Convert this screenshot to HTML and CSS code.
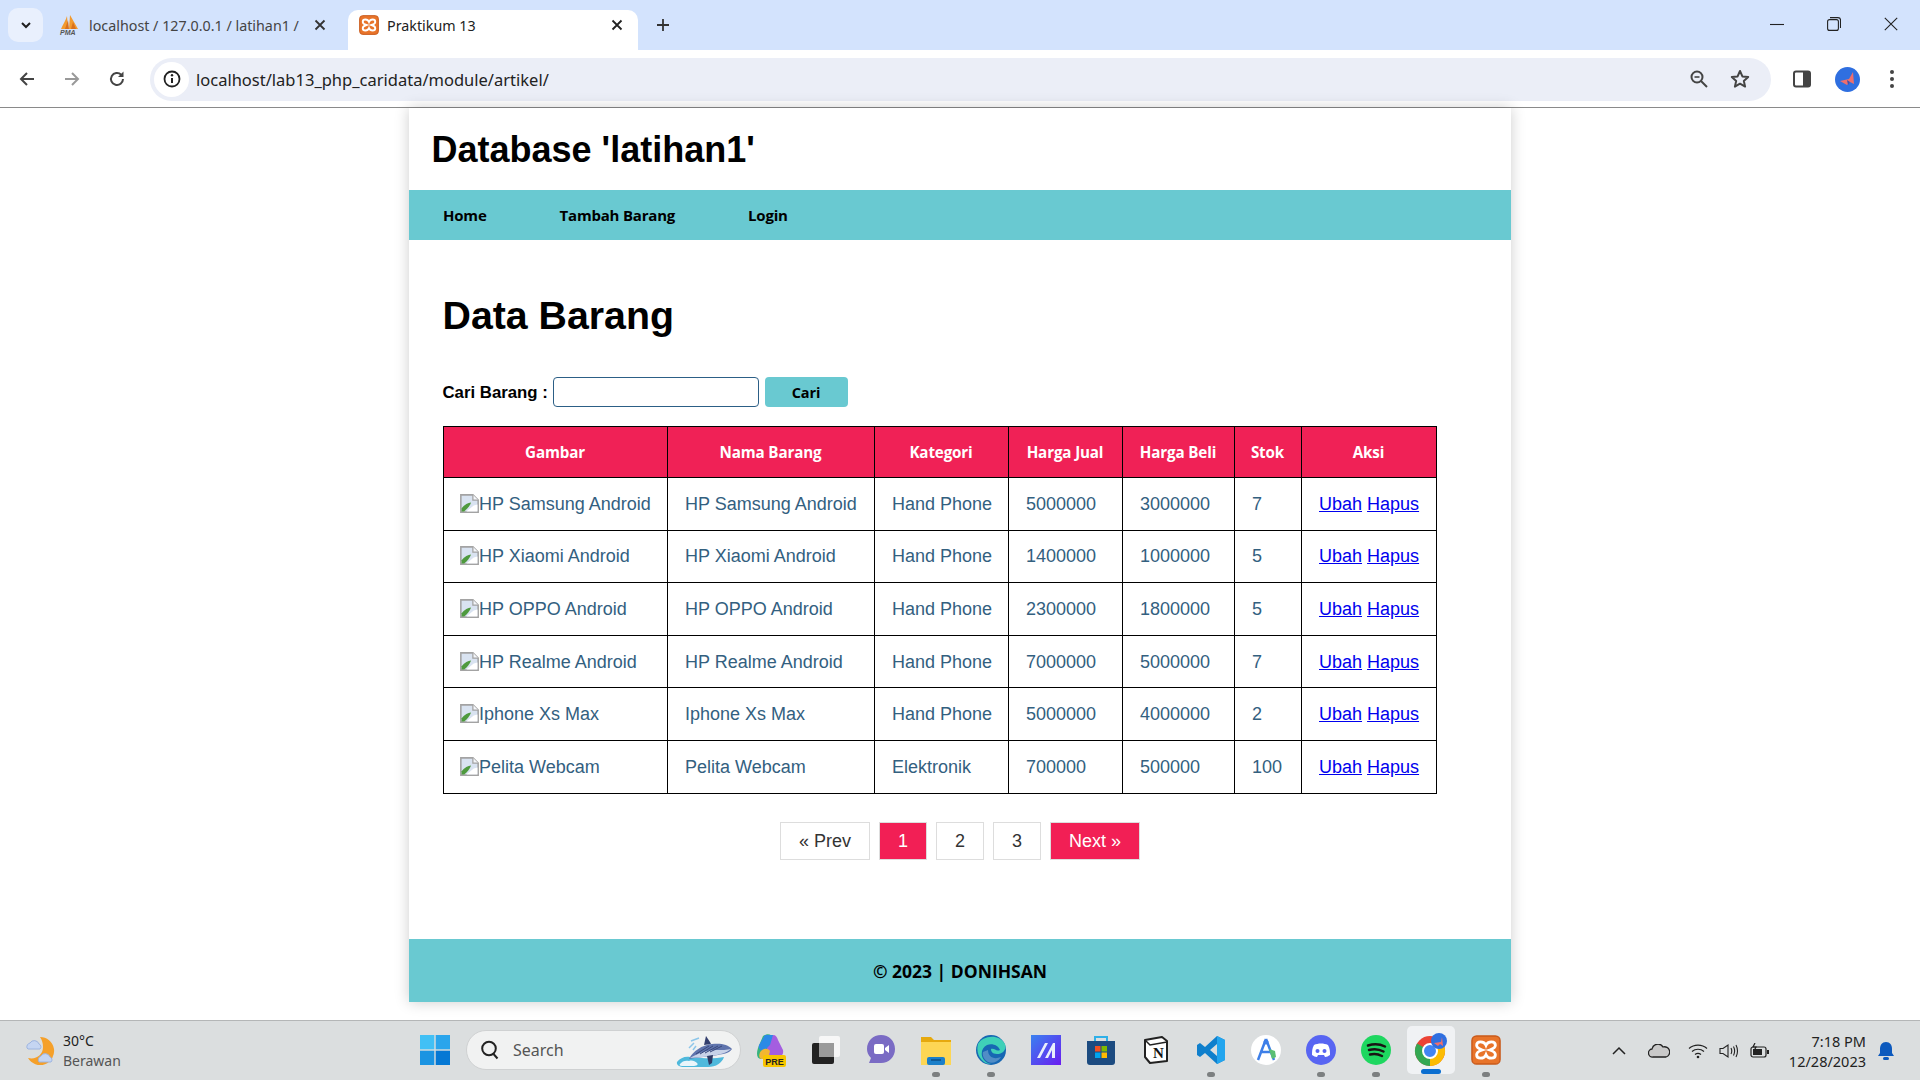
FILE: index.html
```html
<!DOCTYPE html>
<html lang="en">
<head>
    <meta charset="UTF-8">
    <title>Praktikum 13</title>
    <link rel="stylesheet" href="styles.css">
</head>
<body>
    <svg class="defs">
        <symbol id="broken" viewBox="0 0 18 18">
            <path d="M.8.8h11.400l5 5v11.400H.8z" fill="#d9e3f1" stroke="#a3a3a3" stroke-width="1.500"/>
            <path d="M12.200.8v5h5" fill="#f4f6fa" stroke="#a3a3a3" stroke-width="1.200"/>
            <path d="M1.500 16.500v-3c3-3.500 6-5.500 9-5.500-1 3-4 6.500-6.500 8.500z" fill="#4e9a3e"/>
            <path d="M6 16.500l7-5.500 3.500-1v6.500z" fill="#fff"/>
        </symbol>
        <symbol id="xampp" viewBox="0 0 32 32">
            <rect x="1" y="1" width="30" height="30" rx="5" fill="#e8742a"/>
            <rect x="1" y="1" width="30" height="30" rx="5" fill="none" stroke="#c9591a" stroke-width="1.500"/>
            <path d="M16 11c-2-5-10-5-10 0 0 3 3 4 6 5-3 1-6 2-6 5 0 5 8 5 10 0 2 5 10 5 10 0 0-3-3-4-6-5 3-1 6-2 6-5 0-5-8-5-10 0z" fill="none" stroke="#fff" stroke-width="3"/>
        </symbol>
    </svg>

    <div class="tabstrip">
        <div class="tab-search">
            <svg width="14" height="14" viewBox="0 0 14 14"><path d="M3 5l4 4 4-4" fill="none" stroke="#1f1f1f" stroke-width="2"/></svg>
        </div>
        <div class="tab">
            <svg class="favicon" width="22" height="22" viewBox="0 0 22 22">
                <path d="M2 15C4 10 7 6 8 2l1 13zM10 15l1-14 8 14z" fill="#f29a2e"/>
                <path d="M6 15l3-9 1 9zM12 15l2-7 3 7z" fill="#d9701c"/>
                <text x="1" y="21" class="pma">PMA</text>
            </svg>
            <span class="tab-title">localhost / 127.0.0.1 / latihan1 /</span>
            <svg class="tab-x" width="12" height="12" viewBox="0 0 12 12"><path d="M1.500 1.500l9 9M10.500 1.500l-9 9" stroke="#333" stroke-width="1.800"/></svg>
        </div>
        <div class="tab active">
            <svg class="favicon" width="20" height="20"><use href="#xampp"/></svg>
            <span class="tab-title">Praktikum 13</span>
            <svg class="tab-x" width="12" height="12" viewBox="0 0 12 12"><path d="M1.500 1.500l9 9M10.500 1.500l-9 9" stroke="#222" stroke-width="1.800"/></svg>
        </div>
        <svg class="new-tab" width="16" height="16" viewBox="0 0 16 16"><path d="M8 2v12M2 8h12" stroke="#333" stroke-width="1.800"/></svg>
        <div class="win-controls">
            <svg width="14" height="14" viewBox="0 0 14 14"><path d="M0 7.500h14" stroke="#222" stroke-width="1.100"/></svg>
            <svg width="14" height="14" viewBox="0 0 14 14"><rect x=".6" y="2.600" width="10.800" height="10.800" rx="2" fill="none" stroke="#222" stroke-width="1.100"/><path d="M3 .6h8a2.500 2.500 0 0 1 2.500 2.500v8" fill="none" stroke="#222" stroke-width="1.100"/></svg>
            <svg width="14" height="14" viewBox="0 0 14 14"><path d="M.8.8l12.400 12.400M13.200.8L.8 13.200" stroke="#222" stroke-width="1.100"/></svg>
        </div>
    </div>

    <div class="toolbar">
        <svg class="nav-btn" width="18" height="18" viewBox="0 0 18 18"><path d="M16 9H3M9 3L3 9l6 6" fill="none" stroke="#444" stroke-width="2"/></svg>
        <svg class="nav-btn" width="18" height="18" viewBox="0 0 18 18"><path d="M2 9h13M9 3l6 6-6 6" fill="none" stroke="#999" stroke-width="2"/></svg>
        <svg class="nav-btn" width="18" height="18" viewBox="0 0 18 18"><path d="M15 9a6 6 0 1 1-1.800-4.300" fill="none" stroke="#444" stroke-width="2"/><path d="M15.500 1.500v5.500H10z" fill="#444"/></svg>
        <div class="omnibox">
            <span class="info-chip">
                <svg width="18" height="18" viewBox="0 0 18 18"><circle cx="9" cy="9" r="7.500" fill="none" stroke="#222" stroke-width="1.800"/><path d="M9 8v5" stroke="#222" stroke-width="2"/><circle cx="9" cy="5.300" r="1.200" fill="#222"/></svg>
            </span>
            <span class="url">localhost/lab13_php_caridata/module/artikel/</span>
            <svg class="omni-zoom" width="20" height="20" viewBox="0 0 20 20"><circle cx="8" cy="8" r="5.500" fill="none" stroke="#444" stroke-width="2"/><path d="M12 12l6 6" stroke="#444" stroke-width="2"/><path d="M5.500 8h5" stroke="#444" stroke-width="1.600"/></svg>
            <svg class="omni-star" width="20" height="20" viewBox="0 0 20 20"><path d="M10 2l2.400 5.400 5.800.6-4.400 3.900 1.300 5.700L10 14.700l-5.100 2.900 1.300-5.700L1.800 8l5.800-.6z" fill="none" stroke="#444" stroke-width="2" stroke-linejoin="round"/></svg>
        </div>
        <svg class="side-panel" width="18" height="18" viewBox="0 0 18 18"><rect x="1" y="1.500" width="16" height="15" rx="2" fill="#fff" stroke="#444" stroke-width="2"/><rect x="10" y="1.500" width="7" height="15" fill="#444"/></svg>
        <svg class="avatar" width="25" height="25" viewBox="0 0 25 25"><circle cx="12.500" cy="12.500" r="12.500" fill="#2f6fe0"/><path d="M5 14l9-2 4-7 1 12-4-2-3 3z" fill="#ef6f6c"/><path d="M12 13l3 2-2 3z" fill="#3a50b0"/></svg>
        <svg class="menu-dots" width="6" height="20" viewBox="0 0 6 20"><circle cx="3" cy="3" r="2" fill="#444"/><circle cx="3" cy="10" r="2" fill="#444"/><circle cx="3" cy="17" r="2" fill="#444"/></svg>
    </div>

    <div class="viewport">
        <div class="container">
            <header class="site-header">
                <h1>Database 'latihan1'</h1>
            </header>
            <nav class="site-nav">
                <a href="#">Home</a>
                <a href="#">Tambah Barang</a>
                <a href="#">Login</a>
            </nav>
            <main class="content">
                <h2>Data Barang</h2>
                <form class="search-form">
                    <label>Cari Barang :</label>
                    <input type="text" class="search-input">
                    <button type="button" class="search-btn">Cari</button>
                </form>
                <table class="data-table">
                    <thead>
                        <tr>
                            <th>Gambar</th>
                            <th>Nama Barang</th>
                            <th>Kategori</th>
                            <th>Harga Jual</th>
                            <th>Harga Beli</th>
                            <th>Stok</th>
                            <th>Aksi</th>
                        </tr>
                    </thead>
                    <tbody>
                        <tr>
                            <td><svg class="broken-img"><use href="#broken"/></svg>HP Samsung Android</td>
                            <td>HP Samsung Android</td>
                            <td>Hand Phone</td>
                            <td>5000000</td>
                            <td>3000000</td>
                            <td>7</td>
                            <td><a href="#">Ubah</a> <a href="#">Hapus</a></td>
                        </tr>
                        <tr>
                            <td><svg class="broken-img"><use href="#broken"/></svg>HP Xiaomi Android</td>
                            <td>HP Xiaomi Android</td>
                            <td>Hand Phone</td>
                            <td>1400000</td>
                            <td>1000000</td>
                            <td>5</td>
                            <td><a href="#">Ubah</a> <a href="#">Hapus</a></td>
                        </tr>
                        <tr>
                            <td><svg class="broken-img"><use href="#broken"/></svg>HP OPPO Android</td>
                            <td>HP OPPO Android</td>
                            <td>Hand Phone</td>
                            <td>2300000</td>
                            <td>1800000</td>
                            <td>5</td>
                            <td><a href="#">Ubah</a> <a href="#">Hapus</a></td>
                        </tr>
                        <tr>
                            <td><svg class="broken-img"><use href="#broken"/></svg>HP Realme Android</td>
                            <td>HP Realme Android</td>
                            <td>Hand Phone</td>
                            <td>7000000</td>
                            <td>5000000</td>
                            <td>7</td>
                            <td><a href="#">Ubah</a> <a href="#">Hapus</a></td>
                        </tr>
                        <tr>
                            <td><svg class="broken-img"><use href="#broken"/></svg>Iphone Xs Max</td>
                            <td>Iphone Xs Max</td>
                            <td>Hand Phone</td>
                            <td>5000000</td>
                            <td>4000000</td>
                            <td>2</td>
                            <td><a href="#">Ubah</a> <a href="#">Hapus</a></td>
                        </tr>
                        <tr>
                            <td><svg class="broken-img"><use href="#broken"/></svg>Pelita Webcam</td>
                            <td>Pelita Webcam</td>
                            <td>Elektronik</td>
                            <td>700000</td>
                            <td>500000</td>
                            <td>100</td>
                            <td><a href="#">Ubah</a> <a href="#">Hapus</a></td>
                        </tr>
                    </tbody>
                </table>
                <div class="pagination">
                    <a href="#" class="wide">&laquo; Prev</a>
                    <a href="#" class="current">1</a>
                    <a href="#">2</a>
                    <a href="#">3</a>
                    <a href="#" class="wide current">Next &raquo;</a>
                </div>
            </main>
            <footer class="site-footer">&copy; 2023 | DONIHSAN</footer>
        </div>
    </div>

    <div class="taskbar">
        <div class="weather">
            <svg width="32" height="32" viewBox="0 0 32 32">
                <path d="M16 2a14 14 0 1 1-12 21c8 2 15-3 15-11 0-4-1-7-3-10z" fill="#f5a02a"/>
                <path d="M3 13a4 4 0 0 1 3-5 5 5 0 0 1 9 1 3 3 0 0 1 1 5H4z" fill="#c5d5f2" stroke="#9db4e0"/>
                <path d="M15 27a4 4 0 0 1 2-6 5 5 0 0 1 9 1 3 3 0 0 1 1 5z" fill="#c5d5f2" stroke="#9db4e0"/>
            </svg>
            <div class="weather-text">
                <span class="temp">30°C</span>
                <span class="cond">Berawan</span>
            </div>
        </div>
        <div class="task-center">
            <svg class="win-logo" width="30" height="30" viewBox="0 0 30 30">
                <rect x="0" y="0" width="14.300" height="14.300" fill="#41c0f5"/>
                <rect x="15.700" y="0" width="14.300" height="14.300" fill="#2aa5ec"/>
                <rect x="0" y="15.700" width="14.300" height="14.300" fill="#1b94e2"/>
                <rect x="15.700" y="15.700" width="14.300" height="14.300" fill="#0578d4"/>
            </svg>
            <div class="search-pill">
                <svg width="22" height="22" viewBox="0 0 22 22"><circle cx="10" cy="9.500" r="6.800" fill="none" stroke="#222" stroke-width="2"/><path d="M14.500 15l4 4.500" stroke="#222" stroke-width="2"/></svg>
                <span>Search</span>
                <svg class="whale" width="62" height="40" viewBox="0 0 62 40">
                    <path d="M1 32c3-4 8-6 13-5l12 1c8 1 16 0 22-1-2 6-8 10-16 10H8c-4 0-8-2-7-5z" fill="#4fb9dc"/>
                    <path d="M4 34c2-3 6-4 9-3 3-1 6 0 8 2 2 2-1 3-4 3H6c-2 0-3-1-2-2z" fill="#eaf5fa"/>
                    <path d="M13 29c4-8 13-14 23-15 8-1 16 0 20 5-2 4-9 5-14 6-9 2-20 2-29 4z" fill="#5f74ad"/>
                    <path d="M14 28c8-5 18-8 26-8 6 0 11 0 15-1-3 3-9 5-14 6-9 2-19 2-27 3z" fill="#c8d2e8"/>
                    <path d="M28 15l2-9 4 6 1 2z" fill="#333f6e"/>
                    <path d="M31 26l2 9 3-2 1-8z" fill="#2f3a66"/>
                    <path d="M20 24l13-8M24 24l13-8M29 23l13-7M34 22l12-6" stroke="#39487c" stroke-width="1"/>
                    <path d="M13 18l5-5M17 20l3-4M15 11l8-3" stroke="#8cc6ea" stroke-width="1.500" fill="none"/>
                </svg>
            </div>
            <div class="task-apps">
                <span class="app">
                    <svg width="32" height="34" viewBox="0 0 32 34">
                        <path d="M8 3c5-3 9-2 10 3l5 13-8 7H6C2 26 1 21 3 15z" fill="#36b37e"/>
                        <path d="M12 2h6c3 0 4 2 5 5l5 10c1 4-2 8-6 8H12z" fill="#a45ee0"/>
                        <path d="M10 2h8l-3 10-6 6c-4 0-6-3-5-6z" fill="#2b8ae6"/>
                        <path d="M6 18c3-3 7-3 9 0l-2 8H7c-3 0-4-4-1-8z" fill="#f2b632"/>
                        <rect x="8" y="22" width="23" height="12" rx="2" fill="#f7c600"/>
                        <text x="19.500" y="31.500" class="pre">PRE</text>
                    </svg>
                </span>
                <span class="app">
                    <svg width="30" height="30" viewBox="0 0 30 30"><rect x="1" y="8" width="22" height="21" rx="2" fill="#222"/><rect x="8" y="1" width="21" height="21" rx="2" fill="#f7f7f7"/><rect x="8" y="8" width="15" height="14" fill="#9a9a9a"/></svg>
                </span>
                <span class="app">
                    <svg width="30" height="32" viewBox="0 0 30 32"><path d="M15 1c8 0 14 6 14 14s-6 14-14 14H3l2-5C2 21 1 18 1 15 1 7 7 1 15 1z" fill="#7a6bc4"/><rect x="8" y="10" width="10" height="10" rx="2" fill="#fff"/><path d="M19 14l4-3v8l-4-3z" fill="#fff"/></svg>
                </span>
                <span class="app dot">
                    <svg width="30" height="30" viewBox="0 0 30 30"><path d="M0 2h10l3 3h17v24H0z" fill="#e6a90e"/><rect x="0" y="7" width="30" height="23" fill="#fdd654"/><rect x="6" y="22" width="18" height="8" rx="2" fill="#1b7fc9"/><path d="M10 25h10" stroke="#0c4e86" stroke-width="1.500"/></svg>
                </span>
                <span class="app dot">
                    <svg width="32" height="32" viewBox="0 0 32 32"><circle cx="16" cy="16" r="15" fill="#1767b3"/><path d="M3 10C7 2 24-1 30 10c2 5-2 10-8 10-5 0-6-3-6-5 4-1 5 3 9 1-2-5-8-7-13-5-4 2-6 6-5 11 1 4 5 8 10 8C8 31 0 21 3 10z" fill="#3fd0b8"/><path d="M13 16c0 7 6 10 13 7-3 5-9 7-13 5-4-2-6-7-5-10z" fill="#fff" opacity=".25"/></svg>
                </span>
                <span class="app">
                    <svg width="30" height="30" viewBox="0 0 30 30"><defs><linearGradient id="mg" x1="0" y1="0" x2="1" y2="1"><stop offset="0" stop-color="#3a82f0"/><stop offset="1" stop-color="#6a1cf0"/></linearGradient></defs><rect width="30" height="30" fill="url(#mg)"/><path d="M6 23l8-15h3l-8 15zM14 23l8-15h2v15h-3v-8l-4 8z" fill="#e9eefc"/></svg>
                </span>
                <span class="app">
                    <svg width="30" height="32" viewBox="0 0 30 32"><path d="M9 8V3h12v5" fill="none" stroke="#2fb0e8" stroke-width="2"/><path d="M1 7h28v21a3 3 0 0 1-3 3H4a3 3 0 0 1-3-3z" fill="#1c4b80"/><rect x="9" y="12" width="5.500" height="5.500" fill="#f25022"/><rect x="15.500" y="12" width="5.500" height="5.500" fill="#7fba00"/><rect x="9" y="18.500" width="5.500" height="5.500" fill="#00a4ef"/><rect x="15.500" y="18.500" width="5.500" height="5.500" fill="#ffb900"/></svg>
                </span>
                <span class="app">
                    <svg width="26" height="28" viewBox="0 0 26 28"><path d="M2 4l17-3 5 4v20l-17 2-5-6z" fill="#fff" stroke="#222" stroke-width="2" stroke-linejoin="round"/><path d="M2 4l5 5 17-3" fill="none" stroke="#222" stroke-width="1.500"/><text x="15.500" y="22" class="notion">N</text></svg>
                </span>
                <span class="app dot">
                    <svg width="30" height="30" viewBox="0 0 30 30"><path d="M21 1l8 4v20l-8 4-12-11-5 4-3-2v-10l3-2 5 4zM21 9l-7 6 7 6z" fill="#0f7fcc"/><path d="M21 1l8 4v20l-8 4z" fill="#23a5ee"/></svg>
                </span>
                <span class="app">
                    <svg width="30" height="30" viewBox="0 0 30 30"><circle cx="15" cy="15" r="15" fill="#fff"/><path d="M15 4l-8 21M15 4l8 21M9 17h12" fill="none" stroke="#3d7fe8" stroke-width="2.500"/><circle cx="15" cy="7" r="2.500" fill="#3d7fe8"/><path d="M18 14l6 2 1 6-4 2z" fill="#5bbf73"/></svg>
                </span>
                <span class="app dot">
                    <svg width="30" height="30" viewBox="0 0 30 30"><circle cx="15" cy="15" r="15" fill="#5865f2"/><path d="M8 10c4-2 10-2 14 0 2 3 2 7 2 10-2 1-3 2-5 2l-1-2H12l-1 2c-2 0-3-1-5-2 0-3 0-7 2-10z" fill="#fff"/><circle cx="11.500" cy="16" r="2" fill="#5865f2"/><circle cx="18.500" cy="16" r="2" fill="#5865f2"/></svg>
                </span>
                <span class="app dot">
                    <svg width="30" height="30" viewBox="0 0 30 30"><circle cx="15" cy="15" r="15" fill="#1ed760"/><path d="M7 10.500c6-2 12-1.500 17 1M8 15c5-1.500 10-1 14.500 1.500M9 19.500c4-1 8-.7 12 1.500" fill="none" stroke="#191414" stroke-width="2.500" stroke-linecap="round"/></svg>
                </span>
                <span class="app running">
                    <svg width="34" height="34" viewBox="0 0 34 34">
                        <circle cx="16" cy="18" r="15" fill="#eb4335"/>
                        <path d="M16 18L3 10.500A15 15 0 0 0 16 33z" fill="#34a853"/>
                        <path d="M16 18v15a15 15 0 0 0 13-22.500z" fill="#fbbc04"/>
                        <circle cx="16" cy="18" r="7" fill="#4285f4" stroke="#fff" stroke-width="2"/>
                        <circle cx="25" cy="8" r="8" fill="#2f6fe0"/>
                        <path d="M20 10l7-1 1-5 1 9-3-2-2 2z" fill="#ef6f6c"/>
                    </svg>
                </span>
                <span class="app dot">
                    <svg width="30" height="30"><use href="#xampp"/></svg>
                </span>
            </div>
        </div>
        <div class="tray">
            <svg class="tray-caret" width="14" height="10" viewBox="0 0 14 10"><path d="M1 8l6-6 6 6" fill="none" stroke="#222" stroke-width="1.500"/></svg>
            <svg class="tray-cloud" width="22" height="14" viewBox="0 0 22 14"><path d="M5 13a4 4 0 0 1-1-8 6 6 0 0 1 11-2 5 5 0 0 1 3 10z" fill="#c9c9c9" stroke="#222" stroke-width="1.300"/></svg>
            <svg class="tray-wifi" width="20" height="16" viewBox="0 0 20 16"><path d="M1 5.500c5-4.500 13-4.500 18 0M4 8.500c3.500-3 8.500-3 12 0M7 11.500c2-1.500 4-1.500 6 0" fill="none" stroke="#222" stroke-width="1.200"/><circle cx="10" cy="14" r="1.300" fill="#222"/></svg>
            <svg class="tray-sound" width="20" height="16" viewBox="0 0 20 16"><path d="M1 5.500h3L9 2v12L4 10.500H1z" fill="none" stroke="#222" stroke-width="1.100"/><path d="M12 5c1 2 1 4 0 6M14.500 3.500c1.500 3 1.500 6 0 9M17 2c2 4 2 8 0 12" fill="none" stroke="#222" stroke-width="1.100"/></svg>
            <svg class="tray-battery" width="20" height="16" viewBox="0 0 20 16"><rect x="1" y="4" width="15" height="10" rx="2" fill="none" stroke="#222" stroke-width="1.200"/><rect x="3" y="6" width="9" height="6" fill="#222"/><rect x="17" y="7" width="2" height="4" fill="#222"/><path d="M5 0L3 4h3L4 8" fill="none" stroke="#222" stroke-width="1.200"/></svg>
            <div class="clock">
                <span>7:18 PM</span>
                <span>12/28/2023</span>
            </div>
            <svg class="bell" width="18" height="20" viewBox="0 0 18 20"><path d="M9 1c4 0 6 3 6 7v4l2 3H1l2-3V8c0-4 2-7 6-7z" fill="#0c59bd"/><rect x="6" y="16" width="6" height="3" rx="1.500" fill="#0c59bd"/></svg>
        </div>
    </div>
</body>
</html>
```
FILE: styles.css
```css
* {
    box-sizing: border-box;
}
html, body {
    height: 100%;
}
body {
    margin: 0;
    display: flex;
    flex-direction: column;
    height: 100vh;
    overflow: hidden;
    background: #fff;
    font-family: "Liberation Sans", Arial, sans-serif;
    color: #000;
}
.defs {
    position: absolute;
    width: 0;
    height: 0;
}

/* browser tab strip */
.tabstrip {
    height: 50px;
    flex: none;
    display: flex;
    align-items: flex-end;
    background: #d3e3fd;
    padding-left: 8px;
    font-family: "Noto Sans", sans-serif;
    font-size: 14.300px;
    color: #444;
}
.tab-search {
    width: 35px;
    height: 34px;
    margin-bottom: 8px;
    background: #e9f0fd;
    border-radius: 10px;
    display: flex;
    align-items: center;
    justify-content: center;
}
.tab {
    width: 305px;
    height: 40px;
    display: flex;
    align-items: center;
    padding: 0 22px 10px 16px;
    gap: 8px;
}
.tab .tab-title {
    flex: 1;
    white-space: nowrap;
    overflow: hidden;
}
.tab.active {
    width: 290px;
    margin-right: 17px;
    padding: 0 15px 10px 11px;
    background: #fff;
    border-radius: 10px 10px 0 0;
    color: #222;
}
.pma {
    font: italic bold 7px "Liberation Sans", sans-serif;
    fill: #555;
}
.new-tab {
    margin-bottom: 17px;
}
.win-controls {
    margin-left: auto;
    width: 165px;
    height: 50px;
    padding: 0 22px 2px 15px;
    display: flex;
    align-items: center;
    justify-content: space-between;
}

/* browser toolbar */
.toolbar {
    height: 58px;
    flex: none;
    display: flex;
    align-items: center;
    padding: 1px 0 0 18px;
    background: #fff;
    border-bottom: 1px solid #8a8a8a;
    border-radius: 10px 10px 0 0;
}
.nav-btn {
    margin-right: 27px;
}
.nav-btn:nth-child(3) {
    margin-right: 0;
}
.omnibox {
    width: 1621px;
    height: 43px;
    margin-left: 24px;
    display: flex;
    align-items: center;
    background: #ebeef7;
    border-radius: 22px;
    padding-left: 4px;
}
.info-chip {
    width: 35px;
    height: 35px;
    border-radius: 50%;
    background: #fff;
    display: flex;
    align-items: center;
    justify-content: center;
}
.url {
    margin-left: 7px;
    font-family: "Noto Sans", sans-serif;
    font-size: 16.500px;
    color: #222;
}
.omni-zoom {
    margin-left: auto;
}
.omni-star {
    margin: 0 21px;
}
.side-panel {
    margin-left: 22px;
}
.avatar {
    margin-left: 24px;
}
.menu-dots {
    margin-left: 29px;
}

/* page */
.viewport {
    flex: 1;
    min-height: 0;
}
.container {
    width: 1102px;
    margin: 0 auto;
    background: #fff;
    box-shadow: 0 0 14px rgba(0, 0, 0, .2);
}
.site-header {
    height: 82px;
    padding: 21px 0 0 22.500px;
}
.site-header h1 {
    margin: 0;
    font-size: 36px;
    line-height: 41px;
    font-weight: bold;
}
.site-nav {
    height: 50px;
    display: flex;
    align-items: center;
    gap: 73px;
    padding-left: 34px;
    background: #69c9d1;
    font-family: "Open Sans", sans-serif;
    font-size: 15px;
    letter-spacing: -.2px;
    font-weight: bold;
}
.site-nav a {
    color: #000;
    text-decoration: none;
}
.content {
    height: 699px;
    padding: 52.500px 33.500px 0;
}
.content h2 {
    margin: 0 0 39.500px;
    font-size: 39.300px;
    line-height: 45px;
    font-weight: bold;
}
.search-form {
    height: 30px;
    display: flex;
    align-items: center;
    margin-bottom: 18.500px;
}
.search-form label {
    width: 110px;
    padding-top: 1px;
    font-size: 16.800px;
    font-weight: bold;
}
.search-input {
    width: 206px;
    height: 30px;
    border: 1px solid #2c5f86;
    border-radius: 4px;
    background: #fff;
}
.search-btn {
    width: 83px;
    height: 30px;
    margin-left: 6px;
    border: 0;
    border-radius: 4px;
    background: #69c9d1;
    font-family: "Open Sans", sans-serif;
    font-size: 14.500px;
    letter-spacing: -.1px;
    font-weight: bold;
    color: #000;
}

/* table */
.data-table {
    width: 993px;
    table-layout: fixed;
    border-collapse: collapse;
    font-size: 18px;
    color: #33607f;
}
.data-table th, .data-table td {
    border: 1.500px solid #000;
}
.data-table th {
    height: 51.500px;
    background: #f02156;
    color: #fff;
    font-family: "Open Sans", sans-serif;
    font-size: 15.200px;
    letter-spacing: -.15px;
    font-weight: bold;
    padding: 0;
}
.data-table td {
    height: 52.600px;
    padding: 1px 0 0 17.500px;
    white-space: nowrap;
}
.data-table th:nth-child(1) { width: 224px; }
.data-table th:nth-child(2) { width: 207px; }
.data-table th:nth-child(3) { width: 134px; }
.data-table th:nth-child(4) { width: 114px; }
.data-table th:nth-child(5) { width: 112px; }
.data-table th:nth-child(6) { width: 67px; }
.data-table th:nth-child(7) { width: 135px; }
.data-table a {
    color: #0000ee;
}
.broken-img {
    width: 19px;
    height: 19px;
    margin-left: -1px;
    vertical-align: -3px;
}
.pagination {
    margin-top: 28px;
    display: flex;
    justify-content: center;
    gap: 9px;
}
.pagination a {
    width: 48px;
    height: 38px;
    padding-top: 1px;
    display: flex;
    align-items: center;
    justify-content: center;
    border: 1px solid #ddd;
    color: #333;
    font-size: 18px;
    text-decoration: none;
}
.pagination a.wide {
    width: 90px;
}
.pagination a.current {
    background: #f21f55;
    color: #fff;
}
.site-footer {
    height: 63px;
    display: flex;
    align-items: center;
    justify-content: center;
    background: #69c9d1;
    font-family: "Open Sans", sans-serif;
    font-size: 17.500px;
    font-weight: bold;
}

/* windows taskbar */
.taskbar {
    height: 60px;
    flex: none;
    display: flex;
    align-items: center;
    position: relative;
    background: #dbdedf;
    border-top: 1px solid #b4b6b7;
    font-family: "Noto Sans", sans-serif;
}
.weather {
    display: flex;
    align-items: center;
    gap: 7px;
    padding-left: 24px;
    width: 420px;
}
.weather-text {
    display: flex;
    flex-direction: column;
    font-size: 14px;
    line-height: 20px;
    color: #222;
}
.weather-text .cond {
    color: #555;
}
.task-center {
    display: flex;
    align-items: center;
    padding-bottom: 1px;
}
.win-logo {
    margin-right: 16px;
}
.search-pill {
    width: 275px;
    height: 40px;
    display: flex;
    align-items: center;
    gap: 12px;
    padding-left: 12px;
    background: #f1f2f2;
    border: 1px solid #cfd1d2;
    border-radius: 20px;
    color: #555;
    font-size: 16px;
    position: relative;
}
.whale {
    position: absolute;
    right: 2px;
    top: -1px;
}
.task-apps {
    display: flex;
    margin-left: 2px;
}
.app {
    width: 55px;
    height: 48px;
    display: flex;
    align-items: center;
    justify-content: center;
    position: relative;
    border-radius: 5px;
}
.app.dot::after, .app.running::after {
    content: "";
    position: absolute;
    bottom: -3px;
    left: 50%;
    width: 8px;
    height: 5px;
    margin-left: -4px;
    border-radius: 3px;
    background: #7c7f80;
}
.app.running {
    width: 48px;
    margin: 0 3.500px;
    background: #f0f2f4;
}
.app.running::after {
    width: 20px;
    margin-left: -10px;
    bottom: 0;
    background: #0c6fd0;
}
.pre {
    font: bold 9px "Liberation Sans", sans-serif;
    fill: #222;
    text-anchor: middle;
}
.notion {
    font: bold 15px "Liberation Serif", serif;
    fill: #111;
    text-anchor: middle;
}
.tray {
    margin-left: auto;
    display: flex;
    align-items: center;
    padding-right: 25px;
}
.tray-cloud { margin-left: 22px; }
.tray-wifi { margin-left: 18px; }
.tray-sound { margin-left: 11px; }
.tray-battery { margin-left: 11px; }
.clock {
    width: 96px;
    display: flex;
    flex-direction: column;
    align-items: flex-end;
    font-size: 14.500px;
    line-height: 20px;
    color: #222;
}
.bell {
    margin-left: 11px;
}
```
